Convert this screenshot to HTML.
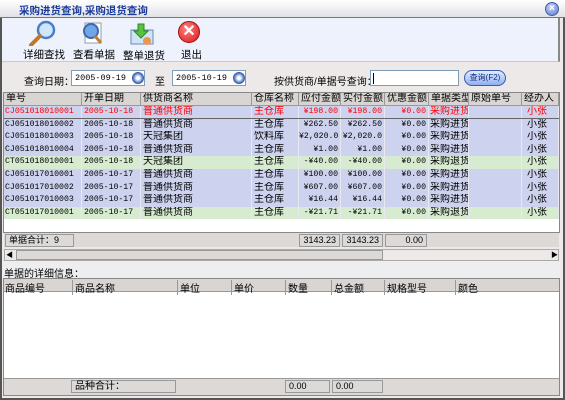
<!DOCTYPE html>
<html><head><meta charset="utf-8"><style>
*{margin:0;padding:0;box-sizing:border-box}
body{width:565px;height:400px;overflow:hidden;background:#fff;font-family:"Liberation Sans","Noto Sans CJK SC",sans-serif;font-size:10px;color:#000;position:relative}
.a{position:absolute;white-space:nowrap}
.win{left:0;top:0;width:565px;height:400px;border:2px solid #555;border-top:none;background:#ece9e8}
.title{left:0;top:0;width:565px;height:18px;background:linear-gradient(#fff,#e2e2e6);border-bottom:1px solid #777}
.title span{position:absolute;left:19px;top:3px;color:#1a3c9c;font-size:10.5px;font-weight:bold}
.tb{left:2px;top:18px;width:558px;height:44px;background:#eef2fc;border-right:2px solid #888;border-bottom:1px solid #c8c8d0}
.btn{position:absolute;font-size:10.5px;text-align:center}
.in{background:#fff;border:1px solid #7f9db9;height:16px;font-size:8.5px;padding:2px 3px;font-family:"Liberation Mono",monospace;overflow:hidden}
.spin{width:12px;height:12px;border-radius:50%;background:radial-gradient(#fff 20%,#6b8fd4 60%,#2e55a8);border:1px solid #3b5ca0}
.grid{left:3px;top:92px;width:557px;height:141px;background:#fff;border:1px solid #888;overflow:hidden}
.hd{position:absolute;top:0;height:13px;background:#d8d5d2;border-right:1px solid #999;border-bottom:1px solid #999;font-size:10px;padding-left:2px;line-height:12px;overflow:hidden;white-space:nowrap}
.row{position:absolute;left:0;width:555px;height:12.6px;font-size:10px;line-height:12px;white-space:nowrap}
.row span{position:absolute;top:0;border-right:1px solid #e8e8f0;height:100%;overflow:hidden}
.b{background:#cdd2ef}.g{background:#d6ebd0}
.r{text-align:right;padding-right:2px}
.mono{font-family:"Liberation Mono",monospace;font-size:8.2px}
.sum{position:absolute;height:13px;border:1px solid #999;background:#dcd9d6;font-size:9px;line-height:11px;padding:0 3px;white-space:nowrap}
</style></head><body>
<div class="a win"></div>
<div class="a title"><span>采购进货查询,采购退货查询</span></div>
<div class="a" style="left:545px;top:2px;width:14px;height:14px;border-radius:50%;background:radial-gradient(circle at 40% 35%,#c8d4f8,#5a78c8);border:1px solid #4060a8;color:#fff;font-size:10px;line-height:12px;text-align:center;font-weight:bold">×</div>
<div class="a tb"></div>
<svg class="a" style="left:27px;top:20px" width="30" height="26"><circle cx="19" cy="10" r="8" fill="#cfe6ff" stroke="#4a7fc8" stroke-width="2.5"/><line x1="13" y1="16" x2="4" y2="25" stroke="#c07828" stroke-width="4" stroke-linecap="round"/></svg>
<div class="btn" style="left:23px;top:47px">详细查找</div>
<svg class="a" style="left:79px;top:20px" width="28" height="26"><rect x="6" y="3" width="16" height="20" fill="#fff" stroke="#99a"/><circle cx="12" cy="11" r="7" fill="#6fa7e8" stroke="#4466aa" stroke-width="2"/><line x1="16" y1="16" x2="22" y2="23" stroke="#c08030" stroke-width="3"/></svg>
<div class="btn" style="left:73px;top:47px">查看单据</div>
<svg class="a" style="left:129px;top:22px" width="28" height="26"><rect x="2" y="8" width="22" height="14" fill="#d0e4f8" stroke="#6a8ab8"/><path d="M9 2h6v7h4l-7 7-7-7h4z" fill="#5ac040" stroke="#2a8a20"/><circle cx="18" cy="19" r="4" fill="#e89850"/></svg>
<div class="btn" style="left:123px;top:48px">整单退货</div>
<div class="a" style="left:178px;top:21px;width:22px;height:22px;border-radius:50%;background:radial-gradient(circle at 40% 35%,#ff8080,#d81818);border:1px solid #a01010;color:#fff;font-weight:bold;font-size:16px;line-height:20px;text-align:center">✕</div>
<div class="btn" style="left:181px;top:47px">退出</div>
<div class="a" style="left:24px;top:73px">查询日期：</div>
<div class="a in" style="left:71px;top:70px;width:74px">2005-09-19</div>
<div class="a spin" style="left:132px;top:72px"></div>
<div class="a" style="left:155px;top:73px">至</div>
<div class="a in" style="left:172px;top:70px;width:74px">2005-10-19</div>
<div class="a spin" style="left:233px;top:72px"></div>
<div class="a" style="left:274px;top:73px">按供货商/单据号查询：</div>
<div class="a in" style="left:370px;top:70px;width:89px"></div>
<div class="a" style="left:373px;top:73px;width:1px;height:11px;background:#000"></div>
<div class="a" style="left:464px;top:70px;width:42px;height:16px;border-radius:8px;background:linear-gradient(#e0ecff,#8fb0f0);border:1px solid #3a5cb0;font-size:8px;color:#1a2c80;text-align:center;line-height:14px">查询(F2)</div>
<div class="a grid">
<div class="hd" style="left:0;width:78px">单号</div>
<div class="hd" style="left:78px;width:59px">开单日期</div>
<div class="hd" style="left:137px;width:111px">供货商名称</div>
<div class="hd" style="left:248px;width:47px">仓库名称</div>
<div class="hd" style="left:295px;width:42px">应付金额</div>
<div class="hd" style="left:337px;width:44px">实付金额</div>
<div class="hd" style="left:381px;width:44px">优惠金额</div>
<div class="hd" style="left:425px;width:40px">单据类型</div>
<div class="hd" style="left:465px;width:53px">原始单号</div>
<div class="hd" style="left:518px;width:37px">经办人</div>
<div id="rows"></div>
</div>
<div class="a" style="left:4px;top:233px;width:555px;height:14px;background:#dcd9d6"></div>
<div class="sum" style="left:5px;top:234px;width:69px">单据合计：9</div>
<div class="sum" style="left:299px;top:234px;width:41px;text-align:right">3143.23</div>
<div class="sum" style="left:342px;top:234px;width:41px;text-align:right">3143.23</div>
<div class="sum" style="left:385px;top:234px;width:42px;text-align:right">0.00</div>
<div class="a" style="left:4px;top:249px;width:555px;height:12px;background:#ece9e8;border:1px solid #aaa"></div>
<div class="a" style="left:16px;top:250px;width:367px;height:10px;background:#dcd9d6;border:1px solid #999"></div>
<div class="a" style="left:6px;top:250px;font-size:7px">◀</div>
<div class="a" style="left:551px;top:250px;font-size:7px">▶</div>
<div class="a" style="left:2px;top:261px;width:558px;height:17px;background:#eeedf0"></div>
<div class="a" style="left:4px;top:265px">单据的详细信息：</div>
<div class="a" style="left:3px;top:278px;width:557px;height:118px;background:#fff;border:1px solid #888"></div>
<div class="a" style="left:4px;top:279px;width:555px;height:13px;background:#d8d5d2;border-bottom:1px solid #999"></div>
<div class="a" style="left:5px;top:280px">商品编号</div>
<div class="a" style="left:72px;top:280px;border-left:1px solid #999;padding-left:2px">商品名称</div>
<div class="a" style="left:177px;top:280px;border-left:1px solid #999;padding-left:2px">单位</div>
<div class="a" style="left:231px;top:280px;border-left:1px solid #999;padding-left:2px">单价</div>
<div class="a" style="left:285px;top:280px;border-left:1px solid #999;padding-left:2px">数量</div>
<div class="a" style="left:331px;top:280px;border-left:1px solid #999;padding-left:2px">总金额</div>
<div class="a" style="left:384px;top:280px;border-left:1px solid #999;padding-left:2px">规格型号</div>
<div class="a" style="left:455px;top:280px;border-left:1px solid #999;padding-left:2px">颜色</div>
<div class="a" style="left:4px;top:378px;width:555px;height:17px;background:#dcd9d6;border-top:1px solid #999"></div>
<div class="sum" style="left:71px;top:380px;width:105px;font-size:10px">品种合计：</div>
<div class="sum" style="left:285px;top:380px;width:45px">0.00</div>
<div class="sum" style="left:332px;top:380px;width:51px">0.00</div>
<script>
var d=[
["CJ051018010001","2005-10-18","普通供货商","主仓库","¥198.00","¥198.00","采购进货","b",1],
["CJ051018010002","2005-10-18","普通供货商","主仓库","¥262.50","¥262.50","采购进货","b"],
["CJ051018010003","2005-10-18","天冠集团","饮料库","¥2,020.0","¥2,020.0","采购进货","b"],
["CJ051018010004","2005-10-18","普通供货商","主仓库","¥1.00","¥1.00","采购进货","b"],
["CT051018010001","2005-10-18","天冠集团","主仓库","-¥40.00","-¥40.00","采购退货","g"],
["CJ051017010001","2005-10-17","普通供货商","主仓库","¥100.00","¥100.00","采购进货","b"],
["CJ051017010002","2005-10-17","普通供货商","主仓库","¥607.00","¥607.00","采购进货","b"],
["CJ051017010003","2005-10-17","普通供货商","主仓库","¥16.44","¥16.44","采购进货","b"],
["CT051017010001","2005-10-17","普通供货商","主仓库","-¥21.71","-¥21.71","采购退货","g"]];
var h='';
d.forEach(function(r,i){
var c=r[8]?'color:#f00;':'';
h+='<div class="row '+r[7]+'" style="top:'+(13+i*12.6)+'px;'+c+(r[8]?'border-bottom:1px solid #666;':'')+'">'+
'<span class="mono" style="left:0;width:78px;padding-left:1px">'+r[0]+'</span>'+
'<span class="mono" style="left:78px;width:59px;padding-left:2px">'+r[1]+'</span>'+
'<span style="left:137px;width:111px;padding-left:2px">'+r[2]+'</span>'+
'<span style="left:248px;width:47px;padding-left:2px">'+r[3]+'</span>'+
'<span class="r mono" style="left:295px;width:42px">'+r[4]+'</span>'+
'<span class="r mono" style="left:337px;width:44px">'+r[5]+'</span>'+
'<span class="r mono" style="left:381px;width:44px">¥0.00</span>'+
'<span style="left:425px;width:40px;padding-left:1px">'+r[6]+'</span>'+
'<span style="left:465px;width:53px"></span>'+
'<span style="left:518px;width:37px;padding-left:5px">小张</span></div>';});
document.getElementById('rows').innerHTML=h;
</script>
</body></html>
